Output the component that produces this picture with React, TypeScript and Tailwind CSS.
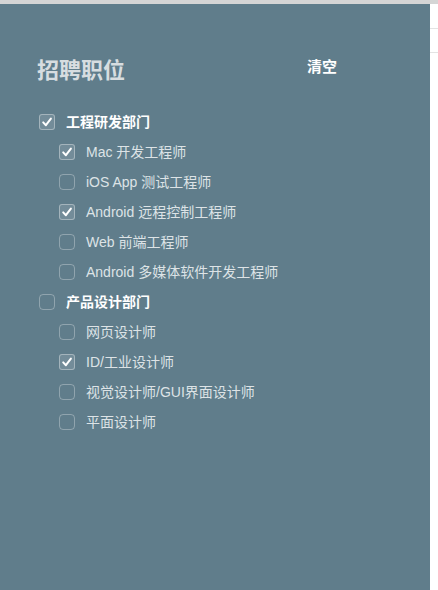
import React from "react";

type Item = { label: string; checked: boolean; group?: boolean };

const items: Item[] = [
  { label: "工程研发部门", checked: true, group: true },
  { label: "Mac 开发工程师", checked: true },
  { label: "iOS App 测试工程师", checked: false },
  { label: "Android 远程控制工程师", checked: true },
  { label: "Web 前端工程师", checked: false },
  { label: "Android 多媒体软件开发工程师", checked: false },
  { label: "产品设计部门", checked: false, group: true },
  { label: "网页设计师", checked: false },
  { label: "ID/工业设计师", checked: true },
  { label: "视觉设计师/GUI界面设计师", checked: false },
  { label: "平面设计师", checked: false },
];

function Box({ checked }: { checked: boolean }) {
  return (
    <div
      className={
        checked
          ? "w-[16px] h-[16px] rounded-[3px] border border-[rgba(255,255,255,0.35)] bg-[rgba(255,255,255,0.12)] flex items-center justify-center"
          : "w-[16px] h-[16px] rounded-[4px] border border-[rgba(255,255,255,0.3)] flex items-center justify-center"
      }
    >
      {checked && (
        <svg width="12" height="12" viewBox="0 0 12 12">
          <path
            d="M2.2 6.4 L4.9 9.2 L9.9 2.6"
            fill="none"
            stroke="#ffffff"
            strokeWidth="2"
            strokeLinecap="round"
            strokeLinejoin="round"
          />
        </svg>
      )}
    </div>
  );
}

export default function App() {
  return (
    <div
      className="w-[438px] h-[590px] bg-white flex flex-col"
      style={{ fontFamily: '"Liberation Sans", "Noto Sans CJK SC", sans-serif' }}
    >
      <div className="h-[4px] bg-[#d5d5d5] shrink-0" />
      <div className="flex flex-1">
        <div className="w-[430px] bg-[#607d8b] flex flex-col pt-[53px]">
          <div className="flex items-start pl-[37px]">
            <div className="w-[270px] text-[22px] font-bold text-[#d7dde0] leading-[28px]">
              招聘职位
            </div>
            <div className="text-[15px] font-bold text-white leading-[20px]">清空</div>
          </div>
          <div className="flex flex-col mt-[22px]">
            {items.map((it) => (
              <div
                key={it.label}
                className={
                  it.group
                    ? "h-[30px] flex items-center gap-[11px] pl-[39px]"
                    : "h-[30px] flex items-center gap-[11px] pl-[59px]"
                }
              >
                <Box checked={it.checked} />
                <span
                  className={
                    it.group
                      ? "text-[14px] font-bold text-white"
                      : "text-[14px] text-[#dde3e6]"
                  }
                >
                  {it.label}
                </span>
              </div>
            ))}
          </div>
        </div>
        <div className="flex-1 flex flex-col">
          <div className="h-[24px]" />
          <div className="h-px bg-[#e3e3e3]" />
          <div className="h-[23px]" />
          <div className="h-px bg-[#e3e3e3]" />
        </div>
      </div>
    </div>
  );
}
